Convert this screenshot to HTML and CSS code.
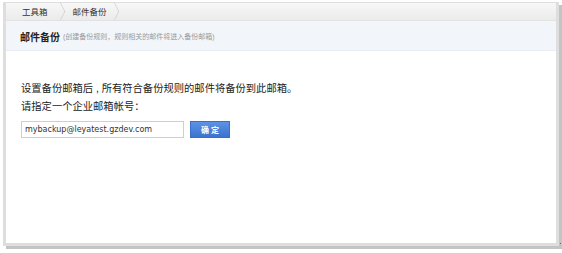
FILE: index.html
```html
<!DOCTYPE html>
<html lang="zh-CN">
<head>
    <meta charset="UTF-8">
    <title>邮件备份</title>
    <link rel="stylesheet" href="styles.css">
</head>
<body>

<div class="frame">
    <div class="crumbs">
        <span class="crumb first">工具箱</span>
        <span class="crumb">邮件备份</span>
    </div>
    <div class="head">
        <span class="title">邮件备份</span>
        <span class="sub">(创建备份规则，规则相关的邮件将进入备份邮箱)</span>
    </div>
    <div class="content">
        <p>设置备份邮箱后 , 所有符合备份规则的邮件将备份到此邮箱。</p>
        <p>请指定一个企业邮箱帐号：</p>
        <div class="row">
            <input type="text" class="mail" value="mybackup@leyatest.gzdev.com">
            <button type="button" class="ok">确 定</button>
        </div>
    </div>
</div>
<span class="dot"></span>

</body>
</html>
```

FILE: styles.css
```css
body {
    margin: 0;
    padding: 2px 0 0 3px;
    background: #fff;
    font-family: "Liberation Sans", "Noto Sans CJK SC", sans-serif;
    color: #333;
    position: relative;
    width: 562px;
    height: 253px;
    box-sizing: border-box;
}
.frame {
    width: 550px;
    height: 240px;
    border: 3px solid #dedede;
    border-top-width: 1px;
    box-shadow: 3px 3px 0 #c4c4c4;
    background: #fff;
    display: flex;
    flex-direction: column;
}
.crumbs {
    height: 17px;
    background: linear-gradient(#f7f7f7, #ebebeb);
    border-bottom: 1px solid #e2e2e2;
    display: flex;
    align-items: center;
    font-size: 8.5px;
    color: #333;
}
.crumb {
    position: relative;
    padding: 0 16px 0 4px;
    height: 17px;
    line-height: 18px;
}
.crumb.first {
    padding-left: 16px;
    padding-right: 21px;
}
.crumb::after {
    content: "";
    position: absolute;
    right: 2px;
    top: 2px;
    width: 12px;
    height: 12px;
    border-top: 1px solid #cfcfcf;
    border-right: 1px solid #cfcfcf;
    transform: scaleX(0.5) rotate(45deg);
}
.head {
    height: 30px;
    background: #f2f6fa;
    border-bottom: 1px solid #e8edf2;
    display: flex;
    align-items: center;
    padding: 1px 0 0 14px;
    box-sizing: border-box;
}
.title {
    font-size: 10px;
    font-weight: bold;
    color: #222;
}
.sub {
    font-size: 7px;
    color: #999;
    margin-left: 3px;
}
.content {
    padding: 31px 0 0 15px;
}
.content p {
    margin: 0 0 5px;
    font-size: 10.3px;
    line-height: 13px;
    color: #222;
}
.row {
    display: flex;
    align-items: center;
    margin-top: 8px;
}
.mail {
    width: 163px;
    height: 17px;
    box-sizing: border-box;
    border: 1px solid #cfcfcf;
    padding: 0 3px;
    font-family: "DejaVu Sans", sans-serif;
    font-size: 8px;
    color: #333;
    margin: 0;
}
.ok {
    margin-left: 6px;
    width: 40px;
    height: 17px;
    border: 1px solid #3a6fc4;
    background: linear-gradient(#5d93e4, #3a73d0);
    color: #fff;
    font-size: 8px;
    font-weight: bold;
    padding: 0;
    font-family: "Noto Sans CJK SC", sans-serif;
}
.dot {
    position: absolute;
    left: 560px;
    top: 243px;
    width: 1px;
    height: 1px;
    background: #666;
}
```
